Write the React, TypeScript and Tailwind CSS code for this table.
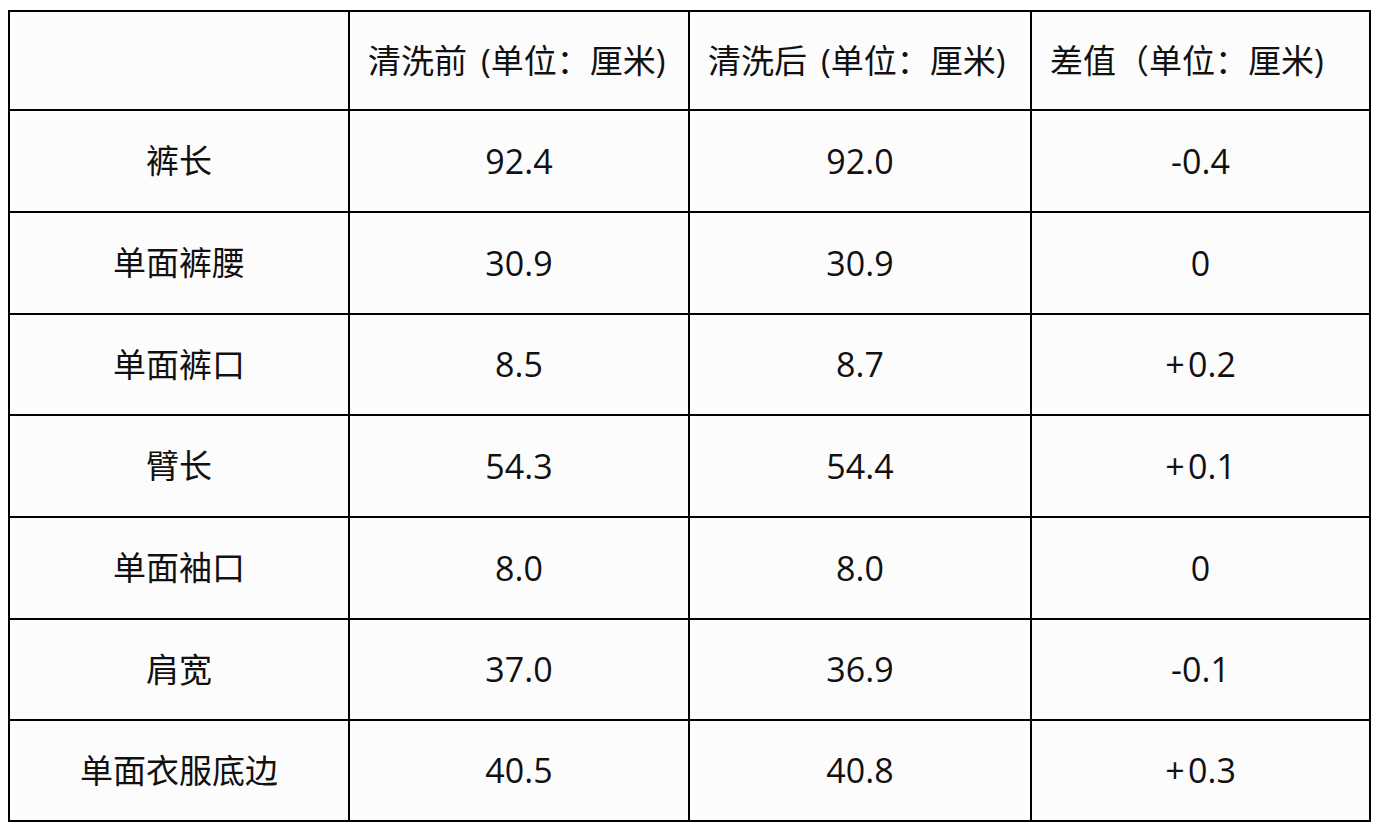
const rows: [string, string, string, string][] = [
  ['裤长', '92.4', '92.0', '-0.4'],
  ['单面裤腰', '30.9', '30.9', '0'],
  ['单面裤口', '8.5', '8.7', '+\u200A0.2'],
  ['臂长', '54.3', '54.4', '+\u200A0.1'],
  ['单面袖口', '8.0', '8.0', '0'],
  ['肩宽', '37.0', '36.9', '-0.1'],
  ['单面衣服底边', '40.5', '40.8', '+\u200A0.3'],
];

const cjk = "font-['Open_Sans','Noto_Sans_CJK_SC',sans-serif]";
const head = `flex items-center border-b-2 border-r-2 border-black pl-[18px] text-[33px] ${cjk}`;

export default function App() {
  return (
    <div className="min-h-[830px] w-[1380px] bg-white pl-[8px] pt-[10px] text-[#111]">
      <div className="grid w-fit grid-cols-[340px_340px_342px_339px] grid-rows-[99px_102px_102px_101px_102px_102px_101px_101px] border-l-2 border-t-2 border-black bg-[#fdfcfd]">
        <div className={head}></div>
        <div className={head}>
          清洗前<span className="ml-[14px]">(单位：厘米)</span>
        </div>
        <div className={head}>
          清洗后<span className="ml-[14px]">(单位：厘米)</span>
        </div>
        <div className={head}>差值（单位：厘米)</div>
        {rows.map((r) =>
          r.map((cell, j) => (
            <div
              key={r[0] + j}
              className={
                j === 0
                  ? `flex items-center justify-center border-b-2 border-r-2 border-black text-[33px] ${cjk}`
                  : "flex items-center justify-center border-b-2 border-r-2 border-black font-['Open_Sans',sans-serif] text-[34px]"
              }
            >
              {cell}
            </div>
          ))
        )}
      </div>
    </div>
  );
}
